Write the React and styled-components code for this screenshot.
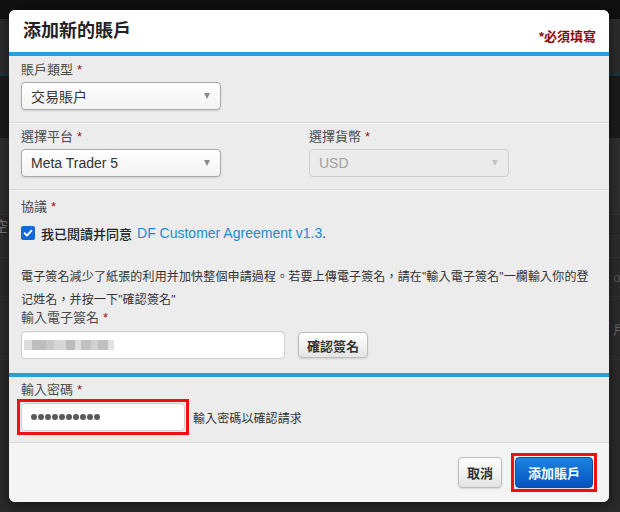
import React from "react";
import styled, { createGlobalStyle } from "styled-components";

const Global = createGlobalStyle`
  html, body { margin: 0; padding: 0; background: #2a2a2a; }
  body {
    width: 620px; height: 512px; overflow: hidden;
    font-family: "Liberation Sans", Arial, "Noto Sans CJK TC", sans-serif;
  }
  * { box-sizing: border-box; }
`;

/* ---------- dimmed page behind the dialog ---------- */
const Page = styled.div`
  position: relative;
  width: 620px;
  height: 512px;
  overflow: hidden;
  background: #2a2a2a;
`;
const TopStrip = styled.div`
  height: 19px;
  background: #101010;
`;
const NavBand = styled.div`
  height: 57px;
  background: #2c2c2c;
  border-bottom: 3px solid #173844;
`;
const HeroBand = styled.div`
  height: 62px;
  background: #1b1b1b;
`;
const BgRow = styled.div`
  height: ${(p) => p.$h}px;
  background: ${(p) => p.$bg};
  border-bottom: 1px solid #333;
  display: flex;
  align-items: center;
  justify-content: space-between;
  overflow: hidden;
`;
const BgText = styled.span`
  color: ${(p) => p.$c};
  font-size: ${(p) => p.$s}px;
  font-weight: ${(p) => (p.$b ? 700 : 400)};
  margin: ${(p) => p.$m};
  white-space: nowrap;
`;

/* ---------- dialog ---------- */
const Modal = styled.div`
  position: absolute;
  left: 9px;
  top: 10px;
  width: 600px;
  height: 492px;
  background: #ececec;
  border-radius: 6px;
  overflow: hidden;
  box-shadow: 0 3px 14px rgba(0, 0, 0, 0.55);
  display: flex;
  flex-direction: column;
`;
const Header = styled.div`
  height: 46px;
  flex: none;
  background: #fff;
  border-bottom: 4px solid #22a1db;
  display: flex;
  align-items: center;
  justify-content: space-between;
  padding: 0 13px 0 14px;
`;
const Title = styled.h1`
  margin: 0;
  font-size: 18px;
  line-height: 24px;
  font-weight: 700;
  color: #222;
`;
const RequiredNote = styled.span`
  margin-top: 9px;
  font-size: 13px;
  font-weight: 700;
  color: #8e0a0a;
`;
const Section = styled.div`
  flex: none;
  padding: ${(p) => p.$pad};
  border-bottom: ${(p) => (p.$accent ? "4px solid #22a1db" : "1px solid #d8d8d8")};
  box-shadow: ${(p) => (p.$accent ? "none" : "0 1px 0 #f6f6f6")};
`;
const Grid2 = styled.div`
  display: grid;
  grid-template-columns: 1fr 1fr;
`;
const Label = styled.div`
  font-size: 13px;
  line-height: ${(p) => p.$lh || 18}px;
  color: #4a4a4a;
  margin: ${(p) => p.$m || "0 0 3px 0"};
`;
const Star = styled.span`
  color: #9b1010;
  margin-left: 4px;
`;
const Select = styled.div`
  width: 200px;
  height: 28px;
  border: 1px solid ${(p) => (p.$disabled ? "#cfcfcf" : "#a9a9a9")};
  border-radius: 4px;
  background: ${(p) =>
    p.$disabled ? "#ebebeb" : "linear-gradient(#ffffff, #f3f3f3)"};
  box-shadow: ${(p) => (p.$disabled ? "none" : "0 1px 2px rgba(0,0,0,0.12)")};
  display: flex;
  align-items: center;
  justify-content: space-between;
  padding: 0 10px 0 9px;
  font-size: 14px;
  color: ${(p) => (p.$disabled ? "#a0a0a0" : "#333")};
`;
const Caret = styled.span`
  width: 0;
  height: 0;
  border-left: 3.5px solid transparent;
  border-right: 3.5px solid transparent;
  border-top: 6px solid ${(p) => (p.$disabled ? "#c4c4c4" : "#8a8a8a")};
`;
const CheckRow = styled.div`
  display: flex;
  align-items: center;
  height: 16px;
  margin-top: 9px;
  font-size: 13px;
  font-weight: 500;
  color: #222;
`;
const CheckBox = styled.span`
  width: 14px;
  height: 14px;
  border-radius: 2px;
  background: #1468d6;
  display: inline-flex;
  align-items: center;
  justify-content: center;
  margin-right: 6px;
  flex: none;
`;
const Link = styled.a`
  color: #1d8bcc;
  font-weight: 400;
  font-size: 14px;
  text-decoration: none;
  margin-left: 5px;
`;
const Dot = styled.span`
  color: #333;
  font-weight: 400;
  font-size: 14px;
`;
const Para = styled.p`
  margin: 25px 0 0 0;
  max-width: 572px;
  font-size: 12px;
  letter-spacing: 0.15px;
  line-height: 23px;
  color: #333;
`;
const FieldRow = styled.div`
  display: flex;
  align-items: center;
`;
const Marked = styled.div`
  display: flex;
  border: 3px solid #ee1111;
  padding: 1px;
  margin: -4px;
`;
const TextInput = styled.div`
  width: ${(p) => p.$w}px;
  height: 28px;
  background: #fff;
  border: 1px solid #cfcfcf;
  border-radius: 4px;
  box-shadow: inset 0 1px 2px rgba(0, 0, 0, 0.06);
  display: flex;
  align-items: center;
  padding: 0 8px;
`;
const Blur = styled.span`
  display: inline-block;
  width: ${(p) => p.$w}px;
  height: 10px;
  background: ${(p) => p.$c};
`;
const Redacted = styled.div`
  display: flex;
  margin-left: -6px;
  filter: blur(0.6px);
`;
const PwDots = styled.div`
  display: flex;
  gap: 1.2px;
  margin-left: 1px;
`;
const PwDot = styled.span`
  width: 5.8px;
  height: 5.8px;
  border-radius: 50%;
  background: #5a5a5a;
`;
const Button = styled.button`
  height: ${(p) => p.$h}px;
  padding: 0 ${(p) => p.$px}px;
  margin-left: ${(p) => p.$ml || 0}px;
  font-family: inherit;
  font-size: 13px;
  font-weight: 700;
  border-radius: 4px;
  cursor: pointer;
  color: ${(p) => (p.$primary ? "#fff" : "#333")};
  border: 1px solid ${(p) => (p.$primary ? "#0a4fa8" : "#bdbdbd")};
  background: ${(p) =>
    p.$primary
      ? "linear-gradient(#1d83dd, #0452bf)"
      : "linear-gradient(#ffffff, #e4e4e4)"};
  box-shadow: 0 1px 2px rgba(0, 0, 0, 0.12);
`;
const Hint = styled.span`
  margin-left: 8px;
  font-size: 12px;
  letter-spacing: 0.1px;
  color: #333;
`;
const Footer = styled.div`
  flex: 1;
  background: #f4f4f4;
  display: flex;
  justify-content: flex-end;
  align-items: flex-start;
  gap: 13px;
  padding: 14px 16px 0 0;
`;

const Check = () => (
  <svg width="10" height="10" viewBox="0 0 10 10">
    <path d="M1.6 5.2 L4 7.5 L8.5 2.6" fill="none" stroke="#fff" strokeWidth="1.9" strokeLinecap="round" strokeLinejoin="round" />
  </svg>
);

export default function App() {
  return (
    <>
      <Global />
      <Page>
        <TopStrip />
        <NavBand />
        <HeroBand />
        <BgRow $h={77} $bg="#2f2f2f">
          <span />
          <BgText $c="#2c3a13" $s={42} $b $m="0 -22px 0 0">0</BgText>
        </BgRow>
        <BgRow $h={21} $bg="#2a2a2a">
          <BgText $c="#7a7a7a" $s={14} $m="0 0 0 -6px">空</BgText>
          <span />
        </BgRow>
        <BgRow $h={22} $bg="#2d2d2d" />
        <BgRow $h={39} $bg="#2b2b2b">
          <span />
          <BgText $c="#5a5a5a" $s={13} $m="0 -4px 0 0">of</BgText>
        </BgRow>
        <BgRow $h={63} $bg="#2c2c2c">
          <span />
          <BgText $c="#6a6a6a" $s={13} $m="0 -6px 0 0">戶</BgText>
        </BgRow>

        <Modal>
          <Header>
            <Title>添加新的賬戶</Title>
            <RequiredNote>*必須填寫</RequiredNote>
          </Header>

          <Section $pad="5px 12px 12px">
            <Label>賬戶類型<Star>*</Star></Label>
            <Select>交易賬户<Caret /></Select>
          </Section>

          <Section $pad="5px 12px 12px">
            <Grid2>
              <div>
                <Label>選擇平台<Star>*</Star></Label>
                <Select>Meta Trader 5<Caret /></Select>
              </div>
              <div>
                <Label>選擇貨幣<Star>*</Star></Label>
                <Select $disabled>USD<Caret $disabled /></Select>
              </div>
            </Grid2>
          </Section>

          <Section $pad="8px 12px 14px" $accent>
            <Label $m="0">協議<Star>*</Star></Label>
            <CheckRow>
              <CheckBox><Check /></CheckBox>
              我已閱讀并同意
              <Link href="#">DF Customer Agreement v1.3</Link>
              <Dot>.</Dot>
            </CheckRow>
            <Para>
              電子簽名減少了紙張的利用并加快整個申請過程。若要上傳電子簽名，請在"輸入電子簽名"一欄輸入你的登记姓名，并按一下"確認簽名"
            </Para>
            <Label $lh={14} $m="-1px 0 6px 0">輸入電子簽名<Star>*</Star></Label>
            <FieldRow>
              <TextInput $w={264}>
                <Redacted>
                  <Blur $w={8} $c="#dcdcdc" />
                  <Blur $w={14} $c="#bdbdbd" />
                  <Blur $w={8} $c="#c9c9c9" />
                  <Blur $w={12} $c="#d6d6d6" />
                  <Blur $w={9} $c="#bcbcbc" />
                  <Blur $w={6} $c="#dedede" />
                  <Blur $w={10} $c="#c2c2c2" />
                  <Blur $w={7} $c="#d0d0d0" />
                  <Blur $w={10} $c="#bfbfbf" />
                  <Blur $w={6} $c="#e2e2e2" />
                </Redacted>
              </TextInput>
              <Button $h={26} $px={8} $ml={13}>確認簽名</Button>
            </FieldRow>
          </Section>

          <Section $pad="4px 12px 11px">
            <Label $m="0 0 4px 0">輸入密碼<Star>*</Star></Label>
            <FieldRow>
              <Marked>
                <TextInput $w={164}>
                  <PwDots>
                    {Array.from({ length: 10 }, (_, i) => (
                      <PwDot key={i} />
                    ))}
                  </PwDots>
                </TextInput>
              </Marked>
              <Hint>輸入密碼以確認請求</Hint>
            </FieldRow>
          </Section>

          <Footer>
            <Button $h={31} $px={8}>取消</Button>
            <Marked>
              <Button $h={31} $px={12} $primary>添加賬戶</Button>
            </Marked>
          </Footer>
        </Modal>
      </Page>
    </>
  );
}
